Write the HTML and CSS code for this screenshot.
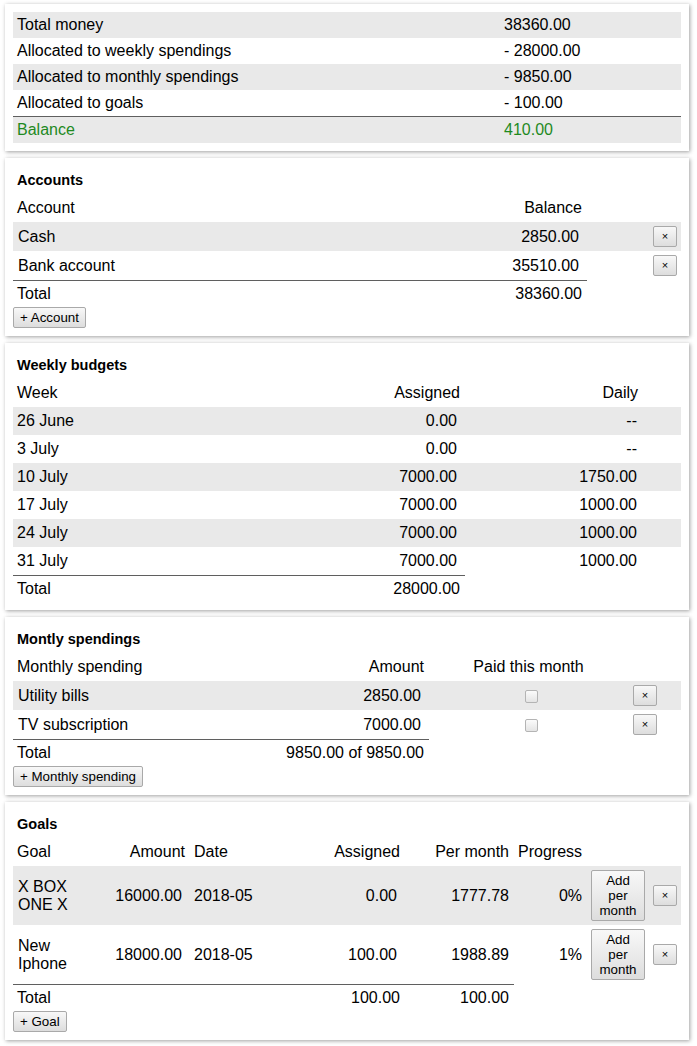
FILE: index.html
```html
<!DOCTYPE html>
<html lang="en">
<head>
<meta charset="utf-8">
<title>Budget</title>
<link rel="stylesheet" href="styles.css">
</head>
<body>

<section class="card">
  <table class="tbl summary">
    <colgroup><col class="s-label"><col class="s-value"></colgroup>
    <tbody>
      <tr class="r26 alt"><td>Total money</td><td>38360.00</td></tr>
      <tr class="r26"><td>Allocated to weekly spendings</td><td>- 28000.00</td></tr>
      <tr class="r26 alt"><td>Allocated to monthly spendings</td><td>- 9850.00</td></tr>
      <tr class="r26"><td>Allocated to goals</td><td>- 100.00</td></tr>
      <tr class="r26 alt balance"><td class="line">Balance</td><td class="line">410.00</td></tr>
    </tbody>
  </table>
</section>

<section class="card">
  <h2 class="title">Accounts</h2>
  <table class="tbl">
    <colgroup><col class="a-name"><col class="a-bal"><col class="a-act"></colgroup>
    <thead>
      <tr class="h"><th>Account</th><th class="num">Balance</th><th></th></tr>
    </thead>
    <tbody>
      <tr class="r29 alt"><td class="ed">Cash</td><td class="num ed">2850.00</td><td class="act-r"><button class="btn x">×</button></td></tr>
      <tr class="r29"><td class="ed">Bank account</td><td class="num ed">35510.00</td><td class="act-r"><button class="btn x">×</button></td></tr>
      <tr class="r26"><td class="line">Total</td><td class="num line">38360.00</td><td></td></tr>
    </tbody>
  </table>
  <button class="btn add">+ Account</button>
</section>

<section class="card">
  <h2 class="title">Weekly budgets</h2>
  <table class="tbl">
    <colgroup><col class="w-week"><col class="w-asg"><col class="w-daily"><col class="w-rest"></colgroup>
    <thead>
      <tr class="h"><th>Week</th><th class="num">Assigned</th><th class="num">Daily</th><th></th></tr>
    </thead>
    <tbody>
      <tr class="r28 alt"><td>26 June</td><td class="num ed">0.00</td><td class="num d">--</td><td></td></tr>
      <tr class="r28"><td>3 July</td><td class="num ed">0.00</td><td class="num d">--</td><td></td></tr>
      <tr class="r28 alt"><td>10 July</td><td class="num ed">7000.00</td><td class="num d">1750.00</td><td></td></tr>
      <tr class="r28"><td>17 July</td><td class="num ed">7000.00</td><td class="num d">1000.00</td><td></td></tr>
      <tr class="r28 alt"><td>24 July</td><td class="num ed">7000.00</td><td class="num d">1000.00</td><td></td></tr>
      <tr class="r28"><td>31 July</td><td class="num ed">7000.00</td><td class="num d">1000.00</td><td></td></tr>
      <tr class="r26"><td class="line">Total</td><td class="num line">28000.00</td><td></td><td></td></tr>
    </tbody>
  </table>
</section>

<section class="card">
  <h2 class="title">Montly spendings</h2>
  <table class="tbl">
    <colgroup><col class="m-name"><col class="m-amt"><col class="m-paid"><col class="m-act"></colgroup>
    <thead>
      <tr class="h"><th>Monthly spending</th><th class="num">Amount</th><th class="ctr">Paid this month</th><th></th></tr>
    </thead>
    <tbody>
      <tr class="r29 alt"><td class="ed">Utility bills</td><td class="num ed">2850.00</td><td class="ctr"><input type="checkbox" class="chk"></td><td class="act-l"><button class="btn x">×</button></td></tr>
      <tr class="r29"><td class="ed">TV subscription</td><td class="num ed">7000.00</td><td class="ctr"><input type="checkbox" class="chk"></td><td class="act-l"><button class="btn x">×</button></td></tr>
      <tr class="r26"><td class="line">Total</td><td class="num line">9850.00 of 9850.00</td><td></td><td></td></tr>
    </tbody>
  </table>
  <button class="btn add">+ Monthly spending</button>
</section>

<section class="card">
  <h2 class="title">Goals</h2>
  <table class="tbl">
    <colgroup><col class="g-name"><col class="g-amt"><col class="g-date"><col class="g-asg"><col class="g-pm"><col class="g-prog"><col class="g-add"><col class="g-del"></colgroup>
    <thead>
      <tr class="h"><th>Goal</th><th class="num">Amount</th><th>Date</th><th class="num">Assigned</th><th class="num">Per month</th><th class="num">Progress</th><th></th><th></th></tr>
    </thead>
    <tbody>
      <tr class="r59 alt"><td class="ed">X BOX ONE X</td><td class="num ed">16000.00</td><td>2018-05</td><td class="num ed">0.00</td><td class="num">1777.78</td><td class="num">0%</td><td class="act-l"><button class="btn addpm">Add per month</button></td><td class="act-r"><button class="btn x">×</button></td></tr>
      <tr class="r59"><td class="ed">New Iphone</td><td class="num ed">18000.00</td><td>2018-05</td><td class="num ed">100.00</td><td class="num">1988.89</td><td class="num">1%</td><td class="act-l"><button class="btn addpm">Add per month</button></td><td class="act-r"><button class="btn x">×</button></td></tr>
      <tr class="r26"><td class="line">Total</td><td class="line"></td><td class="line"></td><td class="num line">100.00</td><td class="num line">100.00</td><td></td><td></td><td></td></tr>
    </tbody>
  </table>
  <button class="btn add">+ Goal</button>
</section>

</body>
</html>
```
FILE: styles.css
```css
html, body {
  background: #ffffff;
}
body {
  margin: 0;
  padding: 4px 8px 1px 5px;
  font-family: "Liberation Sans", Arial, sans-serif;
  font-size: 16px;
  color: #000;
}

.card {
  background: #fff;
  box-shadow: 1px 1px 4px rgba(0, 0, 0, 0.38);
  padding: 8px;
  margin-bottom: 7px;
}

.title {
  font-size: 14.5px;
  font-weight: bold;
  line-height: 16px;
  margin: 6px 0;
  padding-left: 4px;
}

.tbl {
  width: 100%;
  border-collapse: separate;
  border-spacing: 0;
  table-layout: fixed;
}

.tbl th,
.tbl td {
  padding: 0 5px 0 4px;
  line-height: 18px;
  font-weight: normal;
  text-align: left;
  vertical-align: middle;
}

.tbl tr.h th { height: 28px; }
.tbl tr.r26 td { height: 26px; }
.tbl tr.r28 td { height: 28px; }
.tbl tr.r29 td { height: 29px; }
.tbl tr.r59 td { height: 59px; }

.tbl tr.alt td { background: #e9e9e9; }

.tbl .num { text-align: right; }
.tbl .ctr { text-align: center; }
.tbl td.ed { padding-left: 5px; padding-right: 8px; }
.tbl td.d { padding-right: 6px; }
.tbl td.line { border-top: 1px solid #5f5f5f; }

.tbl td.act-r { text-align: right; padding-right: 4px; }
.tbl td.act-l { text-align: left; padding-left: 4px; }

.balance td { color: #1f8a1f; }

/* column widths */
.s-label { width: 487px; }
.s-value { width: 181px; }

.a-name { width: 467px; }
.a-bal { width: 107px; }
.a-act { width: 94px; }

.w-week { width: 287px; }
.w-asg { width: 165px; }
.w-daily { width: 178px; }
.w-rest { width: 38px; }

.m-name { width: 267px; }
.m-amt { width: 149px; }
.m-paid { width: 200px; }
.m-act { width: 52px; }

.g-name { width: 70px; }
.g-amt { width: 107px; }
.g-date { width: 100px; }
.g-asg { width: 115px; }
.g-pm { width: 109px; }
.g-prog { width: 73px; }
.g-add { width: 62px; }
.g-del { width: 32px; }

/* buttons */
.btn {
  font-family: "Liberation Sans", Arial, sans-serif;
  font-size: 13.33px;
  line-height: 15px;
  color: #000;
  background: linear-gradient(#f8f8f8, #dddddd);
  border: 1px solid #a9a9a9;
  border-radius: 2px;
  padding: 2px 6px;
  margin: 0;
  vertical-align: middle;
}
.btn.add {
  display: block;
}
.btn.x {
  width: 24px;
  height: 21px;
  padding: 0;
  font-size: 11px;
  line-height: 19px;
}
.btn.addpm {
  width: 54px;
  padding: 2px 6px;
  text-align: center;
}

.chk {
  -webkit-appearance: none;
  appearance: none;
  width: 13px;
  height: 13px;
  margin: 0 0 0 6px;
  border: 1px solid #b4b4b4;
  border-radius: 2px;
  background: linear-gradient(#fbfbfb, #e4e4e4);
  vertical-align: middle;
}
```
